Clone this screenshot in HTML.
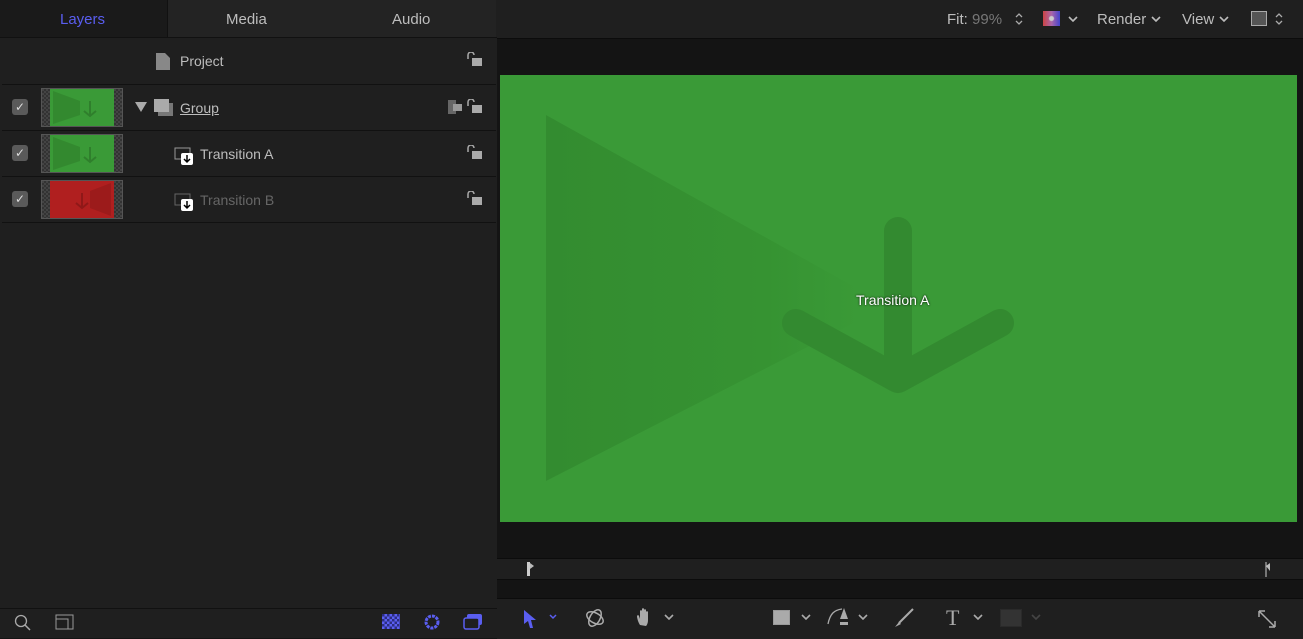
<!DOCTYPE html><html><head><style>
body{margin:0;width:1303px;height:638px;background:#141414;font-family:"Liberation Sans",sans-serif;position:relative;overflow:hidden}
.a{position:absolute}
.t{color:#bdbdbd;font-size:15px}
.row{position:absolute;left:2px;width:494px;height:45px;background:#1f1f1f;border-bottom:1px solid #111}
.cb{position:absolute;left:10px;top:14px;width:16px;height:16px;background:#5a5a5a;border-radius:3px;color:#ddd;font-size:12px;line-height:16px;text-align:center}
.th{position:absolute;left:39px;top:3px;width:80px;height:37px;border:1px solid #555;background:repeating-conic-gradient(#333 0 25%,#444 0 50%) 0 0/4px 4px}
.lk{position:absolute;right:14px;top:14px;width:16px;height:14px}
.cv{position:absolute;width:10px;height:6px}
</style></head><body>
<div class="a" style="left:0;top:0;width:497px;height:638px;background:#1f1f1f"></div>
<div class="a" style="left:0;top:0;width:167px;height:38px;background:#1a1a1a"></div>
<div class="a" style="left:167px;top:0;width:162px;height:37px;background:#232323;border-left:1px solid #111;border-right:1px solid #111"></div>
<div class="a" style="left:330px;top:0;width:166px;height:37px;background:#232323"></div>
<div class="a" style="left:0;top:37px;width:497px;height:1px;background:#111"></div>
<div class="a" style="left:60px;top:11px;color:#5a5ef0;font-size:15px">Layers</div>
<div class="a t" style="left:226px;top:11px">Media</div>
<div class="a t" style="left:392px;top:11px">Audio</div>
<div class="row" style="top:38px;height:46px"><svg class="a" style="left:154px;top:15px" width="14" height="17"><path d="M0 0H9L14 5V17H0Z" fill="#888"/></svg><span class="a t" style="left:178px;top:15px;font-size:14px">Project</span>
<svg class="lk" viewBox="0 0 16 14"><path d="M2 7V3a3 3 0 0 1 6 0" stroke="#aaa" stroke-width="1.5" fill="none"/><rect x="6" y="6" width="10" height="8" fill="#aaa"/></svg></div>
<div class="row" style="top:85px"><div class="cb">✓</div><div class="th"><svg class="a" style="left:8px;top:0" width="64" height="37"><rect width="64" height="37" fill="#3a9a37"/><path d="M3 2L30 12V26L3 35Z" fill="#33892f"/><path d="M40 12V27M34 22l6 5 6-5" stroke="#2f7f2c" stroke-width="2" fill="none"/></svg></div>
<svg class="a" style="left:133px;top:17px" width="12" height="10"><path d="M0 0H12L6 10Z" fill="#aaa"/></svg>
<svg class="a" style="left:152px;top:14px" width="20" height="18"><rect x="4" y="4" width="15" height="13" fill="#777"/><rect x="0" y="0" width="15" height="13" fill="#aaa"/></svg>
<span class="a t" style="left:178px;top:15px;font-size:14px;text-decoration:underline">Group</span>
<svg class="a" style="left:446px;top:15px" width="14" height="14"><rect x="0" y="0" width="8" height="14" fill="#666"/><rect x="5" y="4" width="9" height="7" fill="#999"/></svg>
<svg class="lk" viewBox="0 0 16 14"><path d="M2 7V3a3 3 0 0 1 6 0" stroke="#aaa" stroke-width="1.5" fill="none"/><rect x="6" y="6" width="10" height="8" fill="#aaa"/></svg></div>
<div class="row" style="top:131px"><div class="cb">✓</div><div class="th"><svg class="a" style="left:8px;top:0" width="64" height="37"><rect width="64" height="37" fill="#3a9a37"/><path d="M3 2L30 12V26L3 35Z" fill="#33892f"/><path d="M40 12V27M34 22l6 5 6-5" stroke="#2f7f2c" stroke-width="2" fill="none"/></svg></div>
<svg class="a" style="left:172px;top:16px" width="20" height="18"><rect x="1" y="1" width="15" height="11" fill="none" stroke="#999"/><rect x="7" y="6" width="12" height="12" rx="2" fill="#fff"/><path d="M13 8v7M10 12l3 3 3-3" stroke="#000" fill="none" stroke-width="1.5"/></svg>
<span class="a t" style="left:198px;top:15px;font-size:14px">Transition A</span>
<svg class="lk" viewBox="0 0 16 14"><path d="M2 7V3a3 3 0 0 1 6 0" stroke="#aaa" stroke-width="1.5" fill="none"/><rect x="6" y="6" width="10" height="8" fill="#aaa"/></svg></div>
<div class="row" style="top:177px"><div class="cb">✓</div><div class="th"><svg class="a" style="left:8px;top:0" width="64" height="37"><rect width="64" height="37" fill="#b01f1f"/><path d="M61 2L40 10V27L61 35Z" fill="#9c1b1b"/><path d="M32 12V27M26 22l6 5 6-5" stroke="#8f1818" stroke-width="2" fill="none"/></svg></div>
<svg class="a" style="left:172px;top:16px" width="20" height="18"><rect x="1" y="1" width="15" height="11" fill="none" stroke="#666"/><rect x="7" y="6" width="12" height="12" rx="2" fill="#fff"/><path d="M13 8v7M10 12l3 3 3-3" stroke="#000" fill="none" stroke-width="1.5"/></svg>
<span class="a" style="left:198px;top:15px;font-size:14px;color:#666">Transition B</span>
<svg class="lk" viewBox="0 0 16 14"><path d="M2 7V3a3 3 0 0 1 6 0" stroke="#aaa" stroke-width="1.5" fill="none"/><rect x="6" y="6" width="10" height="8" fill="#aaa"/></svg></div>
<div class="a" style="left:0;top:608px;width:497px;height:1px;background:#111"></div>
<svg class="a" style="left:14px;top:614px" width="18" height="18"><circle cx="7" cy="7" r="5.5" stroke="#aaa" stroke-width="1.3" fill="none"/><path d="M11 11l5 5" stroke="#aaa" stroke-width="1.5"/></svg>
<svg class="a" style="left:55px;top:614px" width="20" height="16"><rect x="1" y="1" width="17" height="14" stroke="#999" fill="none"/><path d="M1 5H13V15" stroke="#999" fill="none"/></svg>
<div class="a" style="left:382px;top:614px;width:18px;height:15px;background:repeating-conic-gradient(#5a5ef0 0 25%,#2c2e80 0 50%) 0 0/5px 5px"></div>
<svg class="a" style="left:423px;top:613px" width="18" height="18"><circle cx="9" cy="9" r="6" stroke="#5a5ef0" stroke-width="3" fill="none" stroke-dasharray="3 1"/></svg>
<svg class="a" style="left:463px;top:613px" width="20" height="18"><rect x="4" y="1" width="15" height="11" rx="2" fill="#5a5ef0"/><rect x="1" y="5" width="15" height="11" rx="2" fill="#1f1f1f" stroke="#5a5ef0" stroke-width="1.5"/></svg>
<div class="a" style="left:497px;top:0;width:806px;height:38px;background:#1f1f1f;border-bottom:1px solid #0c0c0c"></div>
<div class="a t" style="left:947px;top:11px"><span>Fit:</span> <span style="color:#777">99%</span></div>
<svg class="a" style="left:1014px;top:12px" width="10" height="14"><path d="M2 5l3-3 3 3M2 9l3 3 3-3" stroke="#aaa" fill="none" stroke-width="1.3"/></svg>
<div class="a" style="left:1043px;top:11px;width:17px;height:15px;background:radial-gradient(circle,#ccc 0 2px,transparent 3px),linear-gradient(90deg,#c44,#a6a,#44c)"></div>
<svg class="cv" style="left:1068px;top:16px" viewBox="0 0 10 6"><path d="M1 1l4 4 4-4" stroke="#bbb" fill="none" stroke-width="1.6"/></svg>
<div class="a t" style="left:1097px;top:11px">Render</div>
<svg class="cv" style="left:1151px;top:16px" viewBox="0 0 10 6"><path d="M1 1l4 4 4-4" stroke="#bbb" fill="none" stroke-width="1.6"/></svg>
<div class="a t" style="left:1182px;top:11px">View</div>
<svg class="cv" style="left:1219px;top:16px" viewBox="0 0 10 6"><path d="M1 1l4 4 4-4" stroke="#bbb" fill="none" stroke-width="1.6"/></svg>
<div class="a" style="left:1251px;top:11px;width:14px;height:13px;border:1.5px solid #aaa;background:#555"></div>
<svg class="a" style="left:1274px;top:12px" width="10" height="14"><path d="M2 5l3-3 3 3M2 9l3 3 3-3" stroke="#aaa" fill="none" stroke-width="1.3"/></svg>
<div class="a" style="left:500px;top:75px;width:797px;height:447px;background:#3a9a37;overflow:hidden">
<svg width="797" height="447"><defs><linearGradient id="g" x1="0" x2="1"><stop offset="0" stop-color="#338c30"/><stop offset=".7" stop-color="#369332"/><stop offset="1" stop-color="#3a9a37"/></linearGradient></defs><path d="M46 40L360 215V245L46 406Z" fill="url(#g)"/>
<path d="M398 156V300M296 248L398 304L500 248" stroke="#338a30" stroke-width="28" stroke-linecap="round" stroke-linejoin="round" fill="none"/></svg>
<div class="a" style="left:356px;top:217px;color:#fff;font-size:14px;text-shadow:0 0 2px #000">Transition A</div></div>
<div class="a" style="left:497px;top:558px;width:806px;height:20px;background:#1f1f1f;border-top:1px solid #0c0c0c;border-bottom:1px solid #0c0c0c"></div>
<svg class="a" style="left:526px;top:560px" width="10" height="18"><path d="M1 2h3v14H1Z" fill="#ccc"/><path d="M4 3l4 3-4 3Z" fill="#bbb"/></svg>
<svg class="a" style="left:1262px;top:560px" width="10" height="18"><path d="M4 2v15" stroke="#ccc"/><path d="M4 6l4-3v8Z" fill="#bbb"/></svg>
<div class="a" style="left:497px;top:598px;width:806px;height:40px;background:#1f1f1f;border-top:1px solid #0c0c0c"></div>
<svg class="a" style="left:522px;top:608px" width="40" height="22"><path d="M2 2L14 12H9L11 20L8 20L6 13L2 16Z" fill="#5a5ef0"/><path d="M28 7l3 3 3-3" stroke="#5a5ef0" fill="none" stroke-width="1.5"/></svg>
<svg class="a" style="left:584px;top:607px" width="22" height="22"><ellipse cx="11" cy="11" rx="5" ry="9" stroke="#aaa" fill="none" stroke-width="1.5" transform="rotate(30 11 11)"/><ellipse cx="11" cy="11" rx="9" ry="5" stroke="#aaa" fill="none" stroke-width="1.5" transform="rotate(30 11 11)"/></svg>
<svg class="a" style="left:635px;top:607px" width="20" height="22"><path d="M5 18C3 15 2 11 2 9c0-1 2-1 2 0l1 3V4c0-1 2-1 2 0v6V2c0-1 2-1 2 0v8V3c0-1 2-1 2 0v8V5c0-1 2-1 2 0v8c0 3-1 5-2 6Z" fill="#aaa"/></svg>
<svg class="cv" style="left:664px;top:614px" viewBox="0 0 10 6"><path d="M1 1l4 4 4-4" stroke="#aaa" fill="none" stroke-width="1.6"/></svg>
<div class="a" style="left:773px;top:610px;width:15px;height:13px;border:1.5px solid #999;background:#aaa"></div>
<svg class="cv" style="left:801px;top:614px" viewBox="0 0 10 6"><path d="M1 1l4 4 4-4" stroke="#aaa" fill="none" stroke-width="1.6"/></svg>
<svg class="a" style="left:826px;top:606px" width="28" height="22"><path d="M2 18C4 8 8 4 16 3" stroke="#aaa" fill="none" stroke-width="1.3"/><path d="M18 2L22 13H14Z" fill="#aaa"/><rect x="14" y="16" width="8" height="3" fill="#aaa"/></svg>
<svg class="cv" style="left:858px;top:614px" viewBox="0 0 10 6"><path d="M1 1l4 4 4-4" stroke="#aaa" fill="none" stroke-width="1.6"/></svg>
<svg class="a" style="left:893px;top:607px" width="22" height="22"><path d="M20 2L6 16" stroke="#aaa" stroke-width="2"/><path d="M6 15L2 20L8 17Z" fill="#aaa"/></svg>
<div class="a" style="left:946px;top:605px;color:#aaa;font-size:22px;font-family:'Liberation Serif',serif">T</div>
<svg class="cv" style="left:973px;top:614px" viewBox="0 0 10 6"><path d="M1 1l4 4 4-4" stroke="#aaa" fill="none" stroke-width="1.6"/></svg>
<div class="a" style="left:1000px;top:609px;width:20px;height:16px;background:#333;border:1px solid #2a2a2a"></div>
<svg class="cv" style="left:1031px;top:614px" viewBox="0 0 10 6"><path d="M1 1l4 4 4-4" stroke="#444" fill="none" stroke-width="1.6"/></svg>
<svg class="a" style="left:1256px;top:608px" width="22" height="22"><path d="M3 3L19 19M3 3v6M3 3h6M19 19v-6M19 19h-6" stroke="#aaa" stroke-width="1.5" fill="none"/></svg>
</body></html>
